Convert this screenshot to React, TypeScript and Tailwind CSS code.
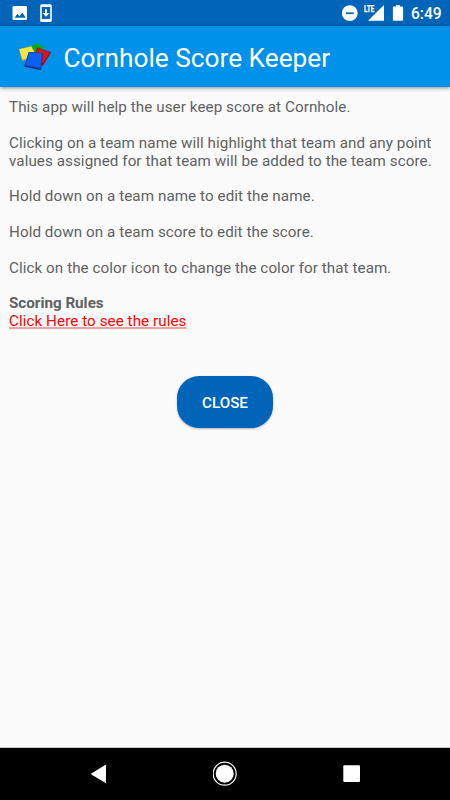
import type { ReactNode } from 'react';

const paragraphs = [
  ['This app will help the user keep score at Cornhole.'],
  [
    'Clicking on a team name will highlight that team and any point',
    'values assigned for that team will be added to the team score.',
  ],
  ['Hold down on a team name to edit the name.'],
  ['Hold down on a team score to edit the score.'],
  ['Click on the color icon to change the color for that team.'],
];

function StatusBar() {
  return (
    <div className="flex h-[26px] shrink-0 items-center bg-[#0064b8] text-white">
      <svg className="ml-3 h-[26px] w-4" viewBox="12 0 16 26">
        <rect x="12.5" y="6" width="14.5" height="14" rx="1.3" fill="#fff" />
        <path d="M14.5 17.7l3-3.9 2 2.4 2.8-3.7 3.5 5.2z" fill="#0064b8" />
      </svg>
      <svg className="ml-3 h-[26px] w-3" viewBox="40 0 12 26">
        <rect x="40.2" y="4.2" width="11.6" height="17.8" rx="1.6" fill="#fff" />
        <path d="M41.8 7h8.4v12h-8.4z" fill="#0064b8" />
        <path d="M45 9.3h2V13h2.5L46 16.7 42.5 13H45z" fill="#fff" />
      </svg>

      <svg className="ml-auto h-[26px] w-4" viewBox="342 0 16 26">
        <circle cx="349.8" cy="13.2" r="7.9" fill="#fff" />
        <rect x="346" y="12.4" width="7.7" height="1.7" fill="#0064b8" />
      </svg>
      <svg className="ml-1.5 h-[26px] w-5" viewBox="364 0 20 26">
        <path d="M384 5v15.7h-16z" fill="#fff" />
        <path d="M364 4h11.3v9H364z" fill="#0064b8" />
        <text
          x="364"
          y="12"
          fill="#fff"
          stroke="#fff"
          strokeWidth=".25"
          fontSize="8.6"
          fontWeight="700"
          textLength="10.3"
          lengthAdjust="spacingAndGlyphs"
          className="font-[Roboto,sans-serif]"
        >
          LTE
        </text>
      </svg>
      <svg className="ml-2 h-[26px] w-3" viewBox="392 0 12 26">
        <path
          d="M393.8 6.5h2.2V5h4v1.5h2.2q.9 0 .9.9v12.4q0 .9-.9.9h-8.4q-.9 0-.9-.9V7.4q0-.9.9-.9z"
          fill="#fff"
        />
      </svg>
      <span className="mr-[9px] ml-[7px] w-[30px] pt-0.5 text-[15.6px] leading-[26px] font-medium whitespace-nowrap">
        6:49
      </span>
    </div>
  );
}

function BagsIcon() {
  return (
    <svg className="h-[30px] w-[34px] shrink-0" viewBox="18 44 34 30">
      {/* green */}
      <path d="M30 49l6.5-3.7 8.2 4-5 5-6.5-.5z" fill="#0da81c" />
      {/* red */}
      <path d="M37 49.5l14.2 4.8-8.4 13.6-9-7z" fill="#980c0c" />
      <path d="M37.6 50.3l12 4.2-6 10.6-8.4-6z" fill="#d81414" />
      {/* yellow */}
      <path d="M18.9 51l12.6-3 4 8.4-6 5.4-7.7 1.2z" fill="#aaa534" />
      <path d="M19.3 51.2l12-2.8 3.8 7.6-6 4.6-6.6.9z" fill="#ece64e" />
      {/* blue */}
      <path d="M28.8 53.9l14.3 1.3-2.1 17-16.8-3.8z" fill="#05276c" />
      <path d="M28.9 54l14 1.3-2 15.4-16.2-3.1z" fill="#0a4fd0" />
      <path d="M29.7 55.2l12 1.1-1.7 13.2-14-2.6z" fill="#0c60f4" />
    </svg>
  );
}

function Line({ children }: { children: ReactNode }) {
  return <span className="block whitespace-nowrap">{children}</span>;
}

function NavigationBar() {
  return (
    <div className="flex h-[52px] shrink-0 items-center bg-black px-[86px]">
      <svg className="h-[52px] w-6" viewBox="86 748 24 52">
        <path d="M106 765.4v17q0 .9-.8.4l-13.8-8.2q-.8-.6 0-1.1l13.8-8.6q.8-.4.8.5z" fill="#fff" />
      </svg>
      <svg className="mx-auto h-[52px] w-6" viewBox="213 748 24 52">
        <circle cx="224.7" cy="773.7" r="11.5" fill="none" stroke="#fff" strokeWidth="1.2" />
        <circle cx="224.7" cy="773.7" r="9" fill="#fff" />
      </svg>
      <svg className="h-[52px] w-6" viewBox="340 748 24 52">
        <rect x="343.3" y="765.3" width="16.7" height="16.7" rx="1" fill="#fff" />
      </svg>
    </div>
  );
}

export default function App() {
  return (
    <div className="flex h-[800px] w-[450px] flex-col overflow-hidden bg-[#fafafa] font-[Roboto,sans-serif]">
      <StatusBar />
      <header className="flex h-[61px] shrink-0 items-center bg-[#0091ea] pl-[18px] shadow-[0_1px_4px_rgba(0,0,0,0.45)]">
        <BagsIcon />
        <h1 className="ml-[11.5px] pt-[3px] text-[26.25px] leading-[58px] whitespace-nowrap text-white">
          Cornhole Score Keeper
        </h1>
      </header>

      <main className="flex flex-1 flex-col px-[9px] pt-[12.4px] text-[15.2px] leading-[17.8px] tracking-[0.07px] text-[#616161]">
        {paragraphs.map((lines) => (
          <p key={lines[0]} className="mb-[17.8px]">
            {lines.map((line) => (
              <Line key={line}>{line}</Line>
            ))}
          </p>
        ))}
        <p className="font-bold tracking-normal">Scoring Rules</p>
        <a
          href="#rules"
          className="self-start whitespace-nowrap text-[#ff0000] underline decoration-[#ff9f9f] decoration-2 underline-offset-1"
        >
          Click Here to see the rules
        </a>
        <button className="mt-[45.6px] h-[52px] w-24 self-center rounded-[22px] bg-[#0064b8] pt-[3px] text-[15.2px] font-medium tracking-normal text-white shadow-[0_1px_2px_rgba(0,0,0,0.3)]">
          CLOSE
        </button>
      </main>

      <div className="h-px shrink-0 bg-[#c4c4c4]" />
      <NavigationBar />
    </div>
  );
}
